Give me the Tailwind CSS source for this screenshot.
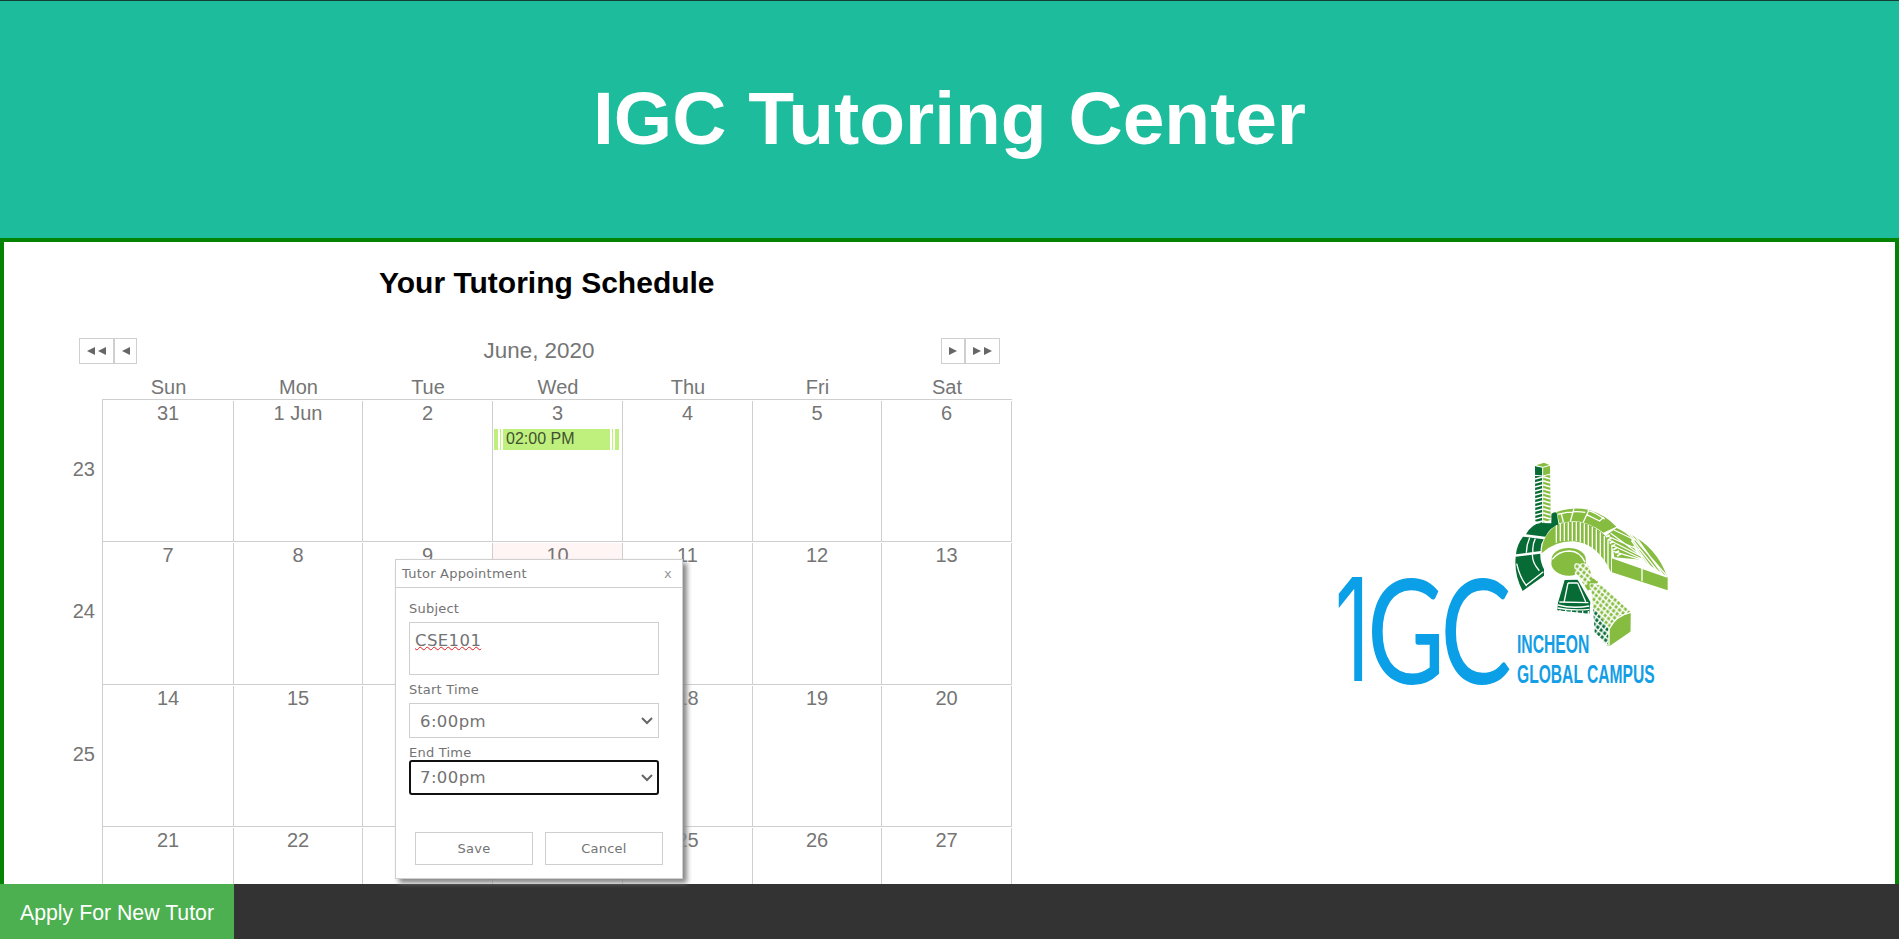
<!DOCTYPE html>
<html lang="en">
<head>
<meta charset="utf-8">
<title>IGC Tutoring Center</title>
<script src="https://cdn.jsdelivr.net/npm/@tailwindcss/browser@4"></script>
</head>
<body class="relative flex h-[939px] w-[1901px] flex-col overflow-hidden bg-white pr-0.5 font-['Liberation_Sans',Arial,sans-serif]">
<header class="flex h-[238px] shrink-0 items-center justify-center border-t border-[#123c34] bg-[#1cbc9c]">
  <h1 class="pb-[2px] text-[75px] leading-none font-bold whitespace-nowrap text-white [word-spacing:1px]">IGC Tutoring Center</h1>
</header>

<main class="flex min-h-0 flex-1 overflow-hidden border-4 border-b-0 border-[#048204]">
  <section class="w-[1089px] shrink-0">
    <h2 class="h-24 pt-[23px] pl-[375px] text-[30px] leading-9 font-bold whitespace-nowrap text-black">Your Tutoring Schedule</h2>
    <div class="ml-[75px] flex h-[26px] w-[921px] items-center justify-between text-[#757575]">
      <div class="flex">
        <button class="flex h-[26px] w-[35px] items-center justify-center border border-[#cfcfcf]"><svg width="20" height="8" viewBox="0 0 20 8" fill="#666"><path d="M8 0v8L0 4zM19 0v8L11 4z"/></svg></button>
        <button class="flex h-[26px] w-[23px] items-center justify-center border border-[#cfcfcf]"><svg width="8" height="8" viewBox="0 0 8 8" fill="#666"><path d="M8 0v8L0 4z"/></svg></button>
      </div>
      <div class="text-[22.4px] leading-[26px]">June, 2020</div>
      <div class="flex">
        <button class="flex h-[26px] w-[24px] items-center justify-center border border-[#cfcfcf]"><svg width="8" height="8" viewBox="0 0 8 8" fill="#666"><path d="M0 0v8L8 4z"/></svg></button>
        <button class="flex h-[26px] w-[35px] items-center justify-center border border-[#cfcfcf]"><svg width="20" height="8" viewBox="0 0 20 8" fill="#666"><path d="M0 0v8L8 4zM11 0v8L19 4z"/></svg></button>
      </div>
    </div>
    <div class="mt-3 ml-[99px] grid h-[23px] grid-cols-[131px_129px_130px_130px_130px_129px_130px] text-center text-[20px] leading-[23px] text-[#757575]">
      <div>Sun</div><div>Mon</div><div>Tue</div><div>Wed</div><div>Thu</div><div>Fri</div><div>Sat</div>
    </div>
    <div id="weeks" class="text-[20px] leading-[23px] text-[#757575]"></div>
  </section>

  <section class="flex-1 pt-[198px] pl-[227px]">
    <svg width="370" height="260" viewBox="0 0 1110 780" font-family="'Liberation Sans',Arial,sans-serif">
      <defs>
        <pattern id="tower" width="50" height="12" patternUnits="userSpaceOnUse" patternTransform="translate(645 0)">
          <path d="M0 9L22 3M24 2L47 9" stroke="#fff" stroke-width="4.5"/>
        </pattern>
        <pattern id="mesh" width="18" height="21" patternUnits="userSpaceOnUse" patternTransform="rotate(-8)">
          <path d="M0 0L18 21M18 0L0 21" stroke="#fff" stroke-width="4.5"/>
        </pattern>
      </defs>
      <g fill="#0b9fe8" font-family="Lato,'Liberation Sans',sans-serif">
        <text transform="translate(44 723) scale(.6 1)" font-size="429" font-family="Inter,sans-serif">1</text>
        <text transform="translate(141 731) scale(.74 1)" font-size="434">G</text>
        <text transform="translate(361 731) scale(.74 1)" font-size="434">C</text>
      </g>
      <g fill="#139ee5" font-weight="bold" font-size="77">
        <text x="591" y="638" textLength="217" lengthAdjust="spacingAndGlyphs">INCHEON</text>
        <text x="591" y="728" textLength="413" lengthAdjust="spacingAndGlyphs">GLOBAL CAMPUS</text>
      </g>
      <!-- dark wing of the building -->
      <path fill="#066b34" d="M618 283Q635 252 662 249L694 250L694 222Q702 215 710 218L716 254Q690 261 676 290zM609 290L671 298Q660 315 662 333L588 343Q590 315 609 290zM587 350L661 341Q660 365 672 388L672 407L608 453Q582 405 587 350z"/>
      <path fill="none" stroke="#fff" stroke-width="4" d="M629 293Q619 315 619 338M646 296Q636 315 639 338M637 343Q637 370 658 392M590 371Q600 414 620 438M618 436L670 395"/>
      <!-- tower -->
      <path fill="#066b34" d="M645 78L668 82L668 249L646 244z"/>
      <path fill="#86bd41" d="M648 76L672 68L690 76L692 239L669 249L668 81z"/>
      <path fill="url(#tower)" d="M643 106h52v136l-25 9l-27-6z"/>
      <path fill="none" stroke="#fff" stroke-width="3" d="M646 77L668 82L690 76M668 82V249M645 106L668 108L692 102"/>
      <!-- curved light roof -->
      <path fill="#86bd41" d="M710 216Q755 199 805 209Q858 225 889 260L850 278Q808 245 762 243L718 249z"/>
      <path fill="none" stroke="#fff" stroke-width="4" d="M713 223Q755 211 796 217M762 205L751 244M808 208L789 248M724 221L730 246M800 224L839 243L851 232M803 211Q830 219 854 238"/>
      <path fill="#86bd41" d="M665 340Q664 290 706 258Q745 239 793 249Q852 269 874 315L873 396Q833 311 762 304Q705 302 665 340z"/>
      <path fill="none" stroke="#fff" stroke-width="4" d="M709 256V308M721 252V304M733 249V303M745 247V302M757 246V302M769 246V303M781 247V306M793 250V313M805 255V320M817 261V331M829 268V343M841 277V356M853 288V371M864 300V386"/>
      <!-- right wing -->
      <path fill="#86bd41" d="M865 281L890 264Q950 290 974 360L883 352Q880 312 856 290zM929 282Q1010 322 1041 409L974 365Q960 320 929 282zM876 354L1043 411V451L876 397z"/>
      <path fill="none" stroke="#fff" stroke-width="4" d="M966 377V424M876 353L1042 411M862 288L958 330M872 280L968 350M882 270L945 300M868 300L962 348M875 315L966 357M880 334L972 362M932 283L1040 407M943 285L1032 408M932 293L1015 396M934 302L1000 391M940 318L988 383"/>
      <path stroke="#fff" stroke-width="13" stroke-dasharray="5 6" d="M862 286L900 350"/>
      <!-- round hall -->
      <ellipse cx="746" cy="369" rx="52" ry="38" fill="#86bd41"/>
      <ellipse cx="746" cy="357" rx="51" ry="33" fill="#86bd41"/>
      <path fill="none" stroke="#fff" stroke-width="4" d="M697 358Q714 334 748 333Q781 334 795 367"/>
      <!-- lower hall -->
      <path fill="#066b34" d="M734 420L773 419L811 486L808 521L712 511L714 488z"/>
      <path fill="none" stroke="#fff" stroke-width="4" d="M744 429H773M744 429L732 487M773 429L797 485M718 486L805 488M714 495Q758 507 808 498M713 504Q758 513 808 508"/>
      <path fill="none" stroke="#fff" stroke-width="10" stroke-dasharray="4 13" d="M718 514L808 518"/>
      <!-- latticed hall -->
      <path fill="#86bd41" d="M768 399Q781 371 807 378L816 412L833 426L804 452z"/>
      <path fill="url(#mesh)" d="M762 370H815L820 414L795 440L766 414z"/>
      <path fill="#86bd41" d="M803 444L820 419L835 425L814 452z"/>
      <path fill="#86bd41" d="M814 453Q829 426 849 438L932 516L931 575L867 619L828 578z"/>
      <path fill="#066b34" d="M819 500L867 568L863 619L824 577z"/>
      <path fill="url(#mesh)" d="M808 430H850L935 516L869 565L863 622L822 578z"/>
      <path fill="#86bd41" d="M867 619L868 568Q887 528 931 519V574z"/>
      <path fill="none" stroke="#fff" stroke-width="4" d="M867 617L867 568Q887 526 933 517"/>
    </svg>
  </section>
</main>

<footer class="flex h-[55px] shrink-0 bg-[#333]">
  <a class="flex w-[234px] items-center justify-center bg-[#4caf50] pt-[4px] text-[21.3px] whitespace-nowrap text-white">Apply For New Tutor</a>
</footer>

<div class="absolute top-[559px] left-[395px] h-[320px] w-[288px] border border-[#cfcfcf] bg-white font-['DejaVu_Sans',Verdana,sans-serif] text-[13px] tracking-[0.22px] text-[#737373] shadow-[4px_4px_5px_#888]">
  <div class="flex h-[28px] items-center justify-between border-b border-[#cfcfcf] pr-[10px] pl-[6px]"><span>Tutor Appointment</span><span class="text-[#999]">x</span></div>
  <div class="flex flex-col pl-[13px]">
    <label class="mt-3 h-[22px] leading-[18px]">Subject</label>
    <div class="h-[53px] w-[250px] border border-[#cfcfcf] px-[5px] pt-[8px] text-[16.5px] leading-5 tracking-[0.4px]"><span class="underline decoration-[#e02020] decoration-wavy decoration-1 underline-offset-0">CSE101</span></div>
    <label class="mt-[6px] h-[22px] leading-[18px]">Start Time</label>
    <div class="flex h-[35px] w-[250px] items-center justify-between border border-[#cfcfcf] pr-[5px] pl-[10px] text-[16.5px] tracking-[0.4px]"><span class="pt-[3px]">6:00pm</span><svg width="12" height="8" viewBox="0 0 12 8" fill="none" stroke="#666" stroke-width="2"><path d="M1 1l5 5l5-5"/></svg></div>
    <label class="mt-[6px] h-[16px] leading-[18px]">End Time</label>
    <div class="flex h-[35px] w-[250px] items-center justify-between rounded-[3px] border-2 border-[#101010] pr-1 pl-[9px] text-[16.5px] tracking-[0.4px]"><span class="pt-[2px]">7:00pm</span><svg width="12" height="8" viewBox="0 0 12 8" fill="none" stroke="#666" stroke-width="2"><path d="M1 1l5 5l5-5"/></svg></div>
  </div>
  <div class="mt-[37px] flex gap-3 pl-[19px]">
    <button class="h-[33px] w-[118px] border border-[#cfcfcf]">Save</button>
    <button class="h-[33px] w-[118px] border border-[#cfcfcf]">Cancel</button>
  </div>
</div>

<script>
const weeks = [
  [23, 142, ['31', '1 Jun', '2', '3', '4', '5', '6']],
  [24, 143, ['7', '8', '9', '10', '11', '12', '13']],
  [25, 142, ['14', '15', '16', '17', '18', '19', '20']],
  ['', 143, ['21', '22', '23', '24', '25', '26', '27']]
];
const event = `<div class="ml-px mt-[6px] flex h-[21px] text-left text-[16px] leading-[19px] text-[#3f5030]"><i class="w-1 bg-[#bff07e]"></i><i class="ml-[2px] w-px bg-[#bff07e]"></i><span class="ml-[2px] w-[107px] bg-[#bff07e] pl-[3px]">02:00 PM</span><i class="ml-[2px] w-px bg-[#bff07e]"></i><i class="ml-[2px] w-1 bg-[#bff07e]"></i></div>`;
document.getElementById('weeks').innerHTML = weeks.map(([n, h, days]) =>
  `<div class="flex" style="height:${h}px"><div class="flex w-[98px] items-center justify-end pr-[7px] pb-[2px]">${n}</div>
  <div class="grid grid-cols-[131px_129px_130px_130px_130px_129px_130px] border-l border-l-[#cfcfcf] text-center">${days.map(d =>
  `<div class="flex flex-col border-t border-t-[#cfcfcf]"><div class="mt-px flex-1 border-r border-r-[#cfcfcf] ${d === '10' ? 'bg-[#fff5f5]' : ''}"><div class="mt-px h-[21px]">${d}</div>${d === '3' ? event : ''}</div></div>`).join('')}</div></div>`).join('');
</script>
</body>
</html>
